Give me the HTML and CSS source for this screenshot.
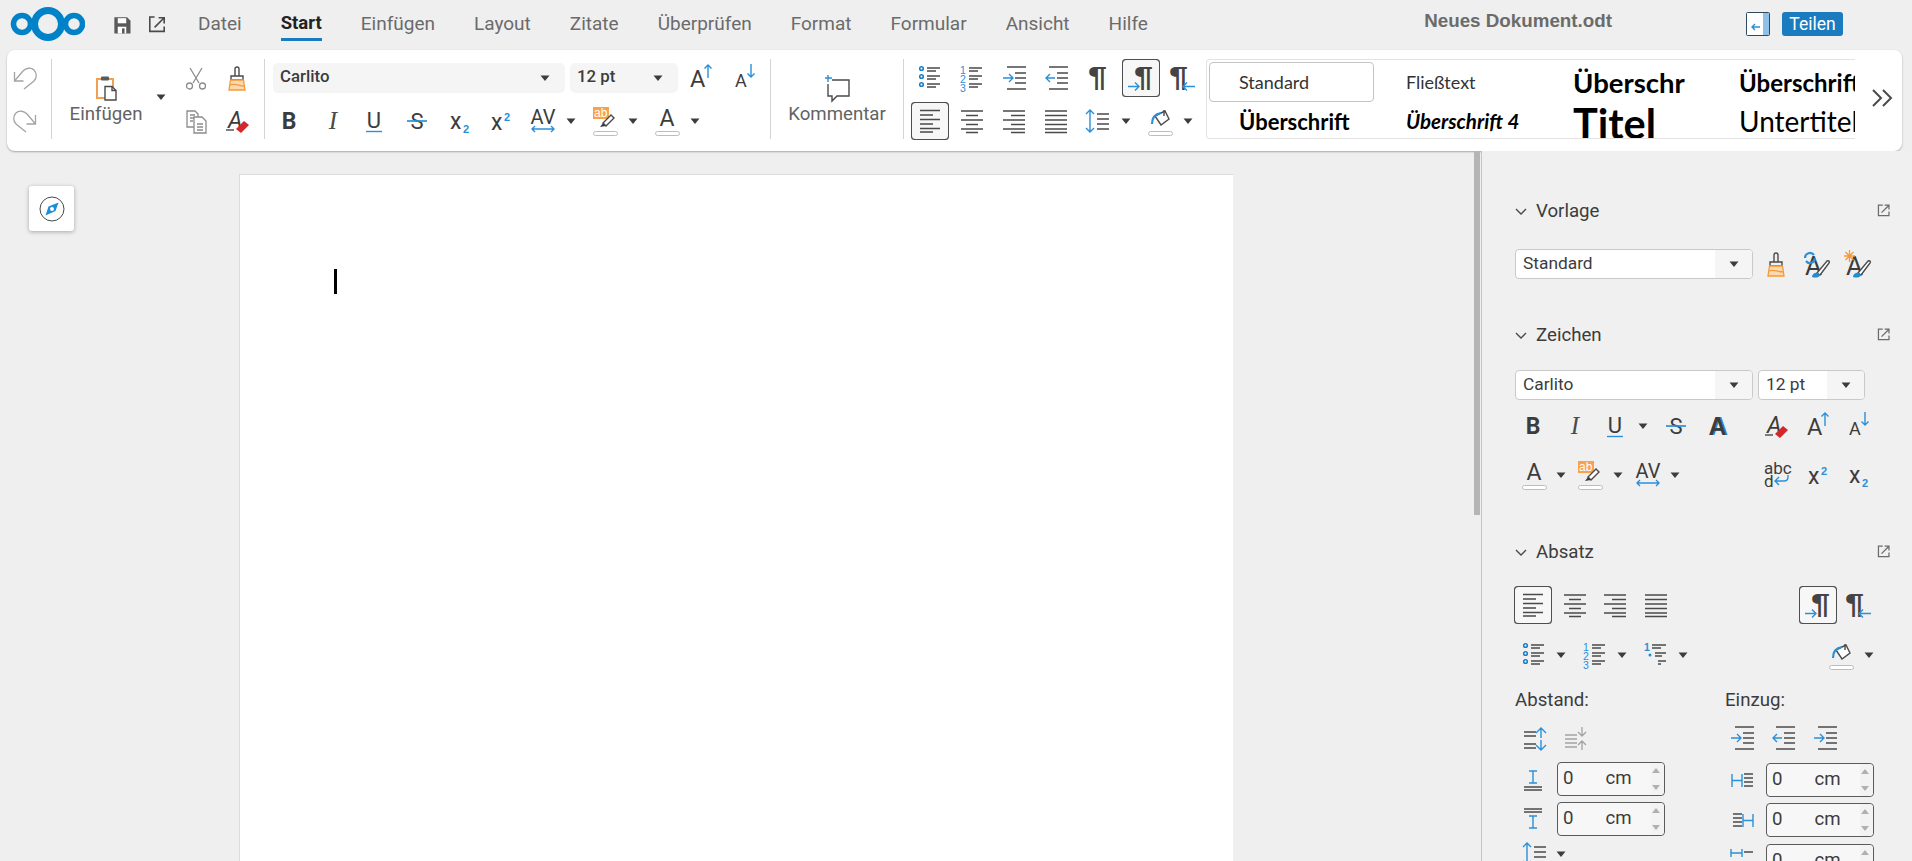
FILE: index.html
```html
<!DOCTYPE html>
<html lang="de">
<head>
<meta charset="utf-8">
<title>Neues Dokument.odt</title>
<link rel="stylesheet" href="styles.css">
</head>
<body>
<svg class="defs" aria-hidden="true"><defs>
<g id="tri"><path class="f-d" d="M7.5 9.5h9l-4.5 5.5z"/></g>
<g id="undo" class="s-g"><path d="M1.5 6v9h9M1.5 15 10 5c3-3 8-4 11-1s3 8 0 11L11 23"/></g>
<g id="redo"><use href="#undo" transform="matrix(-1 0 0 1 24 0)"/></g>
<g id="clip"><path class="s-o2" d="M11 23H3V4h16v8"/><rect class="f-d2" x="7" y="1.5" width="8" height="4" rx="1"/><path class="s-d w" d="M11 11.500h7l4 4V25H11z"/><path class="s-d" d="M18 11.500v4h4"/></g>
<g id="cut" class="s-m"><path d="M6 2l9 15M18 2 9 17"/><circle cx="5.500" cy="20" r="3"/><circle cx="18.500" cy="20" r="3"/></g>
<g id="brush"><path class="s-d" d="M10 10V3a2 2 0 014 0V10M6 10h12v4H6z"/><path class="so-fill" d="M5.500 14h13l1.500 10H4z"/><path class="s-o" d="M5 19c5-2 9 1 14 1"/></g>
<g id="copy" class="s-m"><path d="M3 2h8l3 3v13H3zM6 6h5M6 9h5M6 12h3"/><path class="w" d="M10 8h8l4 4v12H10z"/><path d="M13 15h6M13 18h6M13 21h6"/></g>
<g id="clear"><text class="t-si" x="3" y="19" font-size="23">A</text><path class="s-d" d="M1 21h8"/><path class="f-r" d="M11 20l8-8 5 4-8 8z"/></g>
<g id="bold"><text class="t-sb" x="12" y="20" font-size="23" text-anchor="middle">B</text></g>
<g id="ital"><text class="t-si2" x="12" y="20" font-size="25" text-anchor="middle">I</text></g>
<g id="under"><text class="t-r" x="12" y="19" font-size="22" text-anchor="middle">U</text><path class="s-b" d="M4 22.500h16"/></g>
<g id="strike"><text class="t-r" x="12" y="20" font-size="22" text-anchor="middle">S</text><path class="s-bm" d="M2 12h20"/></g>
<g id="sub"><text class="t-r" x="2" y="20" font-size="23">x</text><text class="t-bb" x="15" y="24" font-size="11">2</text></g>
<g id="sup"><text class="t-r" x="2" y="21" font-size="23">x</text><text class="t-bb" x="15" y="12" font-size="11">2</text></g>
<g id="av"><text class="t-r" x="12" y="15" font-size="20" text-anchor="middle">AV</text><path class="s-b" d="M1 20h22M4 17l-3 3 3 3M20 17l3 3-3 3"/></g>
<g id="hl"><rect class="f-o" x="0" y="-2" width="16" height="12"/><text class="t-w" x="1" y="8" font-size="12">ab</text><path class="s-d w" d="M10 14l8-8 3 3-8 8z"/><path class="f-d" d="M7 18l3-4 3 3z"/><rect class="pill" x="0.500" y="22.500" width="24" height="4" rx="2"/></g>
<g id="color"><text class="t-r" x="12" y="17" font-size="23" text-anchor="middle">A</text><rect class="pill" x="0.500" y="22.500" width="24" height="4" rx="2"/></g>
<g id="aup"><text class="t-r" x="1" y="21" font-size="23.500">A</text><path class="s-b" d="M19 12V-1M15.500 2.500 19-1l3.500 3.500"/></g>
<g id="adn"><text class="t-r" x="3" y="21" font-size="18">A</text><path class="s-b" d="M19-2v13M15.500 7.500 19 11l3.500-3.500"/></g>
<g id="blines" class="s-d"><path d="M9 2h13M9 5h9M9 10h13M9 13h9M9 18h13M9 21h9"/><circle class="s-bd" cx="3.500" cy="2.500" r="1.800"/><circle class="s-bd" cx="3.500" cy="10.500" r="1.800"/><circle class="s-bd" cx="3.500" cy="18.500" r="1.800"/></g>
<g id="nlines" class="s-d"><path d="M9 2h13M9 5h9M9 10h13M9 13h9M9 18h13M9 21h9"/><text class="t-b" x="0" y="8" font-size="10.500">1</text><text class="t-b" x="0" y="17" font-size="10.500">2</text><text class="t-b" x="0" y="26" font-size="10.500">3</text></g>
<g id="mlines" class="s-d"><path d="M8 2h14M8 5h9M11 10h11M11 13h7M14 18h8M14 21h3"/><text class="t-bb" x="0" y="8" font-size="10.500">1</text><circle class="f-b" cx="6" cy="12" r="1.500"/></g>
<g id="indent" class="s-d"><path d="M4 1h19M12 7h11M12 12h11M12 17h11M4 23h19"/><path class="s-b" d="M0 12h10M6 8l4 4-4 4"/></g>
<g id="outdent" class="s-d"><path d="M4 1h19M12 7h11M12 12h11M12 17h11M4 23h19"/><path class="s-b" d="M10 12H1M5 8l-4 4 4 4"/></g>
<g id="indent2" class="s-d"><path d="M4 1h19M12 7h11M12 12h11M12 17h11M4 23h19"/><path class="s-b" d="M0 12h10M6 8l4 4-4 4"/></g>
<g id="pilc"><text class="t-p" x="3" y="20" font-size="27" textLength="19" lengthAdjust="spacingAndGlyphs">¶</text></g>
<g id="pilr"><text class="t-p" x="5" y="20" font-size="27" textLength="19" lengthAdjust="spacingAndGlyphs">¶</text><path class="s-b" d="M-1 20.500h11M6 16.500l4 4-4 4"/></g>
<g id="pill"><text class="t-p" x="0" y="20" font-size="27" textLength="19" lengthAdjust="spacingAndGlyphs">¶</text><path class="s-b" d="M26 20.500H14M18 16.500l-4 4 4 4"/></g>
<g id="al" class="s-d"><path d="M2 1.500h20M2 6h13M2 10.500h20M2 15h13M2 19.500h20M2 23h13"/></g>
<g id="ac" class="s-d"><path d="M1 2h22M6 6.500h12M1 11h22M6 15.500h12M1 20h22M6 23.500h12"/></g>
<g id="ar" class="s-d"><path d="M1 2h22M9 6.500h14M1 11h22M9 15.500h14M1 20h22M9 23.500h14"/></g>
<g id="aj" class="s-d"><path d="M1 2h22M1 6.500h22M1 11h22M1 15.500h22M1 20h22M1 23.500h22"/></g>
<g id="lsp" class="s-d"><path d="M11 5h12M11 10h12M11 15h12M11 20h12"/><path class="s-b" d="M4 1v22M0 5l4-4 4 4M0 19l4 4 4-4"/></g>
<g id="pcol"><path class="s-d w" d="M7 7 17 2l4 8-8 6z"/><path class="s-bt" d="M4 15c0-6 2-10 9-11"/><path class="s-d" d="M16 1v6"/><rect class="pill" x="0.500" y="22.500" width="24" height="4" rx="2"/></g>
<g id="cmt"><path class="s-d" d="M7 5h17v16H12l-5 5v-5H3V9"/><path class="s-b" d="M3 0v7M0 3h7"/></g>
<g id="more"><path class="s-dt" d="M2 4l8 8-8 8M12 4l8 8-8 8"/></g>
<g id="chev"><path class="s-d" d="M1 4l5 5 5-5"/></g>
<g id="ext"><path class="s-et" d="M10 3H3v17h17v-7"/><path class="s-et" d="M8 15 20 3M13 3h7v7"/></g>
<g id="ext2"><path class="s-dt" d="M9 2H3v18h18v-6"/><path class="s-dt" d="M9 15 21 3M14 3h7v7"/></g>
<g id="save"><path class="f-d2" d="M3 3h15l4 4v15H3z"/><rect class="f-w" x="7" y="4" width="10" height="6"/><rect class="f-w" x="7" y="14" width="10" height="8"/><rect class="f-d2" x="12" y="16" width="3" height="6"/></g>
<g id="style-up"><text class="t-r" x="0" y="23" font-size="26">A</text><path class="s-d w" d="M12 21 22 9c2-1 3 1 2 2L15 23z"/><path class="f-b" d="M7 25c0-3 3-5 6-4l2 2c-1 3-5 3-8 2z"/><path class="s-bt" d="M0 6a5 5 0 019-3M10 6a5 5 0 01-9 3"/></g>
<g id="style-new"><text class="t-r" x="0" y="23" font-size="26">A</text><path class="s-d w" d="M12 21 22 9c2-1 3 1 2 2L15 23z"/><path class="f-b" d="M7 25c0-3 3-5 6-4l2 2c-1 3-5 3-8 2z"/><path class="s-o" d="M-2 4h11M3.500 -2V10M-.5 0l8 8M7.500 0l-8 8"/></g>
<g id="aout"><text class="t-bo" x="13" y="21" font-size="25" text-anchor="middle">A</text><text class="t-sb2" x="11.500" y="21" font-size="25" text-anchor="middle">A</text></g>
<g id="abc"><text class="t-r" x="0" y="11" font-size="17">abc</text><text class="t-r" x="0" y="24" font-size="17">d</text><path class="s-b" d="M24 12v2c0 3-2 4-4 4H11M15 14l-4 4 4 4"/></g>
<g id="sp-inc" class="s-d"><path d="M1 6h12M1 10h12M1 18h12M1 22h12"/><path class="s-b" d="M18 12V2M13 7l5-5 5 5M18 14v10M13 19l5 5 5-5"/></g>
<g id="sp-dec" class="s-g"><path d="M1 9h12M1 13h12M1 17h12M1 21h12M18 1v9M14 6l4 4 4-4M18 24v-9M14 19l4-4 4 4"/></g>
<g id="sp-top" class="s-d"><path d="M3 20h18M3 23h18"/><path class="s-b" d="M12 4v12M8 4h8M8 16h8"/></g>
<g id="sp-bot" class="s-d"><path d="M3 2h18M3 5h18"/><path class="s-b" d="M12 9v12M8 9h8M8 21h8"/></g>
<g id="in-l" class="s-d"><path d="M14 6h9M14 10h9M14 14h9M14 18h9"/><path class="s-b" d="M2 6v13M2 12.500h10M12 6v13"/></g>
<g id="in-r" class="s-d"><path d="M3 6h9M3 10h9M3 14h9M3 18h9"/><path class="s-b" d="M13 6v13M13 12.500h10M23 6v13"/></g>
<g id="in-f" class="s-d"><path d="M14 3h9M14 15h9"/><path class="s-b" d="M1 0v8M1 4h11M12 0v8"/></g>
</defs></svg>

<header class="topbar">
  <svg class="logo" viewBox="0 0 76 34"><circle class="ring" cx="13" cy="17" r="8.500"/><circle class="ring big" cx="39" cy="17" r="13.500"/><circle class="ring" cx="65" cy="17" r="8.500"/></svg>
  <svg class="ic top-ic"><use href="#save"/></svg>
  <svg class="ic top-ic2"><use href="#ext2"/></svg>
  <nav class="menu">
    <span>Datei</span><span class="cur">Start</span><span>Einfügen</span><span>Layout</span><span>Zitate</span><span>Überprüfen</span><span>Format</span><span>Formular</span><span>Ansicht</span><span>Hilfe</span>
  </nav>
  <div class="doc-title">Neues Dokument.odt</div>
  <svg class="toggle" viewBox="0 0 24 24"><rect class="tg-box" x=".5" y=".5" width="23" height="23" rx="1"/><rect class="tg-side" x="17" y="1" width="6" height="22"/><path class="s-b" d="M14 15H6M9 12l-3 3 3 3"/></svg>
  <button class="share">Teilen</button>
</header>

<section class="toolbar">
  <div class="g g-undo"><svg class="ic"><use href="#undo"/></svg><svg class="ic"><use href="#redo"/></svg></div>
  <div class="sep"></div>
  <div class="g-paste">
    <div class="paste"><svg class="ic"><use href="#clip"/></svg><span>Einfügen</span></div>
    <svg class="ic paste-arrow"><use href="#tri"/></svg>
    <div class="g r-pair"><svg class="ic"><use href="#cut"/></svg><svg class="ic"><use href="#brush"/></svg><svg class="ic"><use href="#copy"/></svg><svg class="ic"><use href="#clear"/></svg></div>
  </div>
  <div class="sep"></div>
  <div class="g g-font">
    <div class="row font1">
      <div class="tcombo tc-font"><span>Carlito</span><svg class="ic"><use href="#tri"/></svg></div>
      <div class="tcombo tc-size"><span>12 pt</span><svg class="ic"><use href="#tri"/></svg></div>
      <svg class="ic m-aup"><use href="#aup"/></svg>
      <svg class="ic m-adn"><use href="#adn"/></svg>
    </div>
    <div class="ir r-font2">
      <svg class="ic"><use href="#bold"/></svg><svg class="ic"><use href="#ital"/></svg><svg class="ic"><use href="#under"/></svg><svg class="ic"><use href="#strike"/></svg><svg class="ic"><use href="#sub"/></svg><svg class="ic"><use href="#sup"/></svg><svg class="ic"><use href="#av"/></svg><svg class="ic"><use href="#tri"/></svg><svg class="ic"><use href="#hl"/></svg><svg class="ic"><use href="#tri"/></svg><svg class="ic"><use href="#color"/></svg><svg class="ic"><use href="#tri"/></svg>
    </div>
  </div>
  <div class="sep"></div>
  <div class="g-comment"><svg class="ic"><use href="#cmt"/></svg><span>Kommentar</span></div>
  <div class="sep"></div>
  <div class="g g-para">
    <div class="ir r-para1">
      <svg class="ic"><use href="#blines"/></svg><svg class="ic"><use href="#nlines"/></svg><svg class="ic"><use href="#indent"/></svg><svg class="ic"><use href="#outdent"/></svg><svg class="ic"><use href="#pilc"/></svg><svg class="ic on"><use href="#pilr"/></svg><svg class="ic"><use href="#pill"/></svg>
    </div>
    <div class="ir r-para2">
      <svg class="ic on"><use href="#al"/></svg><svg class="ic"><use href="#ac"/></svg><svg class="ic"><use href="#ar"/></svg><svg class="ic"><use href="#aj"/></svg><svg class="ic"><use href="#lsp"/></svg><svg class="ic"><use href="#tri"/></svg><svg class="ic"><use href="#pcol"/></svg><svg class="ic"><use href="#tri"/></svg>
    </div>
  </div>
  <div class="styles">
    <div class="st st-std selected">Standard</div>
    <div class="st st-std">Fließtext</div>
    <div class="st st-h">Überschr</div>
    <div class="st st-h1">Überschrift</div>
    <div class="st st-h2">Überschrift</div>
    <div class="st st-h4">Überschrift 4</div>
    <div class="st st-title">Titel</div>
    <div class="st st-sub">Untertitel</div>
  </div>
  <svg class="ic more"><use href="#more"/></svg>
</section>

<main class="workspace">
  <div class="canvas">
    <button class="nav-btn" aria-label="Navigator">
      <svg class="compass" viewBox="0 0 26 26"><circle class="cp-ring" cx="13" cy="13" r="12"/><path class="f-b" d="M19.500 6.500 16.500 15 6.500 19.500 9.500 10.500z"/><circle class="f-w" cx="13" cy="13" r="2"/></svg>
    </button>
    <div class="page"><div class="caret"></div></div>
  </div>
  <div class="vbar"><div class="thumb"></div></div>
  <aside class="sidebar">
    <div class="ph"><svg class="chev"><use href="#chev"/></svg><span>Vorlage</span><svg class="ic ext"><use href="#ext"/></svg></div>
    <div class="row tmpl">
      <div class="combo c-wide"><span>Standard</span><i><svg class="ic"><use href="#tri"/></svg></i></div>
      <svg class="ic"><use href="#brush"/></svg><svg class="ic"><use href="#style-up"/></svg><svg class="ic"><use href="#style-new"/></svg>
    </div>

    <div class="ph ph-z"><svg class="chev"><use href="#chev"/></svg><span>Zeichen</span><svg class="ic ext"><use href="#ext"/></svg></div>
    <div class="row char-combos">
      <div class="combo c-wide"><span>Carlito</span><i><svg class="ic"><use href="#tri"/></svg></i></div>
      <div class="combo c-size"><span>12 pt</span><i><svg class="ic"><use href="#tri"/></svg></i></div>
    </div>
    <div class="ir s-ch1">
      <svg class="ic"><use href="#bold"/></svg><svg class="ic"><use href="#ital"/></svg><svg class="ic"><use href="#under"/></svg><svg class="ic"><use href="#tri"/></svg><svg class="ic"><use href="#strike"/></svg><svg class="ic"><use href="#aout"/></svg><svg class="ic"><use href="#clear"/></svg><svg class="ic"><use href="#aup"/></svg><svg class="ic"><use href="#adn"/></svg>
    </div>
    <div class="ir s-ch2">
      <svg class="ic"><use href="#color"/></svg><svg class="ic"><use href="#tri"/></svg><svg class="ic"><use href="#hl"/></svg><svg class="ic"><use href="#tri"/></svg><svg class="ic"><use href="#av"/></svg><svg class="ic"><use href="#tri"/></svg><svg class="ic"><use href="#abc"/></svg><svg class="ic"><use href="#sup"/></svg><svg class="ic"><use href="#sub"/></svg>
    </div>

    <div class="ph ph-a"><svg class="chev"><use href="#chev"/></svg><span>Absatz</span><svg class="ic ext"><use href="#ext"/></svg></div>
    <div class="ir s-al">
      <svg class="ic on"><use href="#al"/></svg><svg class="ic"><use href="#ac"/></svg><svg class="ic"><use href="#ar"/></svg><svg class="ic"><use href="#aj"/></svg><svg class="ic on"><use href="#pilr"/></svg><svg class="ic"><use href="#pill"/></svg>
    </div>
    <div class="ir s-li">
      <svg class="ic"><use href="#blines"/></svg><svg class="ic"><use href="#tri"/></svg><svg class="ic"><use href="#nlines"/></svg><svg class="ic"><use href="#tri"/></svg><svg class="ic"><use href="#mlines"/></svg><svg class="ic"><use href="#tri"/></svg><svg class="ic"><use href="#pcol"/></svg><svg class="ic"><use href="#tri"/></svg>
    </div>
    <div class="spacing">
      <div class="col">
        <div class="lbl">Abstand:</div>
        <div class="ir s-sp"><svg class="ic"><use href="#sp-inc"/></svg><svg class="ic"><use href="#sp-dec"/></svg></div>
        <div class="sr sr-1"><svg class="ic"><use href="#sp-top"/></svg><div class="spin"><span>0</span><span>cm</span><b></b></div></div>
        <div class="sr"><svg class="ic"><use href="#sp-bot"/></svg><div class="spin"><span>0</span><span>cm</span><b></b></div></div>
        <div class="ir s-ls"><svg class="ic"><use href="#lsp"/></svg><svg class="ic"><use href="#tri"/></svg></div>
      </div>
      <div class="col col-r">
        <div class="lbl">Einzug:</div>
        <div class="ir s-in"><svg class="ic"><use href="#indent"/></svg><svg class="ic"><use href="#outdent"/></svg><svg class="ic"><use href="#indent2"/></svg></div>
        <div class="sr sr-1"><svg class="ic"><use href="#in-l"/></svg><div class="spin"><span>0</span><span>cm</span><b></b></div></div>
        <div class="sr"><svg class="ic"><use href="#in-r"/></svg><div class="spin"><span>0</span><span>cm</span><b></b></div></div>
        <div class="sr sr-3"><svg class="ic"><use href="#in-f"/></svg><div class="spin"><span>0</span><span>cm</span><b></b></div></div>
      </div>
    </div>
  </aside>
</main>
</body>
</html>
```

FILE: styles.css
```css
* { box-sizing: border-box; }
html, body { margin: 0; height: 100%; }
body {
  height: 100vh;
  overflow: hidden;
  display: flex;
  flex-direction: column;
  background: #efefef;
  font-family: Roboto, "Liberation Sans", sans-serif;
  color: #3c3c3c;
}
.defs { position: absolute; width: 0; height: 0; }
.ic { display: block; width: 24px; height: 24px; overflow: visible; flex: none; }
text { stroke: none; }

/* icon paint: group classes are inherited, so a child class can override them */
.s-d { stroke: #4a4a4a; fill: none; stroke-width: 1.4; }
.s-g { stroke: #a3a3a3; fill: none; stroke-width: 1.3; }
.s-m { stroke: #8c8c8c; fill: none; stroke-width: 1.3; }
.s-b { stroke: #2a90d8; fill: none; stroke-width: 1.4; }
.s-bm { stroke: #2a90d8; fill: none; stroke-width: 1.7; }
.s-bd { stroke: #1d7fc4; fill: #fff; stroke-width: 1.6; }
.s-bt { stroke: #2a90d8; fill: none; stroke-width: 2.2; }
.s-o { stroke: #f59a3c; fill: none; stroke-width: 1.3; }
.s-o2 { stroke: #f0a050; fill: none; stroke-width: 2; }
.so-fill { stroke: #f59a3c; fill: #fbd9ae; stroke-width: 1.3; }
.s-dt { stroke: #4a4a4a; fill: none; stroke-width: 2; }
.s-et { stroke: #6b6b6b; fill: none; stroke-width: 2; transform: scale(.62) translate(9px, 7px); }
.w, .s-d.w { fill: #fff; }
.f-d { fill: #3c3c3c; stroke: none; }
.f-d2 { fill: #5a5a5a; stroke: none; }
.f-b { fill: #1d8dd8; stroke: none; }
.f-o { fill: #f9a24d; stroke: none; }
.f-r { fill: #d3272b; stroke: none; }
.f-w { fill: #fff; stroke: none; }
.pill { fill: #fff; stroke: #bdbdbd; stroke-width: 1; }
.t-r { font-family: Roboto, sans-serif; fill: #3c3c3c; }
.t-sb { font-family: Roboto, sans-serif; font-weight: 700; fill: #3c3c3c; }
.t-sb2 { font-family: "Liberation Sans", sans-serif; font-weight: 700; fill: #3c3c3c; }
.t-si { font-family: Roboto, sans-serif; font-style: italic; fill: #3c3c3c; }
.t-si2 { font-family: "Liberation Serif", serif; font-style: italic; fill: #4a4a4a; }
.t-bb { font-family: "Liberation Sans", sans-serif; font-weight: 700; fill: #2a90d8; }
.t-b { font-family: "Liberation Sans", sans-serif; fill: #2a90d8; }
.t-bo { font-family: "Liberation Sans", sans-serif; font-weight: 700; fill: #1d8dd8; }
.t-w { font-family: "Liberation Sans", sans-serif; fill: #fff; }
.t-p { font-family: "Liberation Sans", sans-serif; font-weight: 700; fill: #444; }

/* top bar */
.topbar { height: 50px; flex: none; display: flex; align-items: center; }
.logo { width: 76px; height: 34px; margin: 0 0 2px 9px; flex: none; }
.ring { fill: none; stroke: #0082c9; stroke-width: 5.500; }
.ring.big { stroke-width: 7; }
.top-ic { margin-left: 25px; transform: scale(.85); }
.top-ic2 { margin-left: 11px; transform: scale(.8); }
.menu { display: flex; gap: 39px; margin-left: 29px; font-size: 19px; color: #6b6b6b; }
.menu span { padding: 3px 0; border-bottom: 3px solid transparent; }
.menu .cur { color: #222; font-weight: 700; font-size: 18.500px; border-bottom-color: #1a7cbf; }
.doc-title {
  margin: 0 134px 8px auto;
  font: 700 18.800px "Liberation Sans", sans-serif;
  color: #6b6b6b;
}
.toggle { width: 24px; height: 24px; margin: 0 12px 2px 0; flex: none; }
.tg-box { fill: #fff; stroke: #2f4a60; stroke-width: 1; }
.tg-side { fill: #8fc0e8; }
.share {
  width: 61px; height: 24px; margin: 0 69px 2px 0; padding: 0;
  border: 0; border-radius: 3px; background: #1a7cbf; color: #fff;
  font: 17.500px Roboto, sans-serif;
}

/* toolbar */
.toolbar {
  height: 101px; flex: none; margin: 0 10px 0 7px;
  display: flex; align-items: flex-start;
  background: #fff; border-radius: 8px;
  box-shadow: 0 1px 2px rgba(0, 0, 0, .3);
}
.sep { width: 1px; height: 80px; margin-top: 9px; background: #d4d4d4; flex: none; }
.g { display: grid; grid-auto-rows: 43px; padding-top: 6px; align-items: center; }
.row { display: flex; align-items: center; }
.ir { display: grid; align-items: center; justify-items: start; }
.g-undo { width: 44px; padding-left: 6px; }
.g-paste { width: 212px; display: flex; flex: none; }
.paste {
  width: 72px; margin: 25px 0 0 18px;
  display: flex; flex-direction: column; align-items: center; gap: 3px;
  font-size: 18.670px; color: #636363; line-height: 24px; white-space: nowrap;
}
.paste-arrow { margin: 35px 0 0 7px; }
.r-pair { grid-template-columns: 41px 24px; margin-left: 11px; justify-items: start; }
.g-font { width: 505px; }
.font1 { padding-left: 8px; }
.tcombo {
  height: 30px; background: #f5f5f5; border-radius: 5px;
  display: flex; align-items: center; justify-content: space-between;
  padding: 0 8px 0 7px; font-size: 16.800px; font-weight: 500; color: #3c3c3c;
}
.tcombo span { margin-bottom: 4px; }
.tc-font { width: 292px; }
.tc-size { width: 108px; margin-left: 5px; }
.m-aup { margin-left: 11px; }
.m-adn { margin-left: 19px; }
.r-font2 { padding-left: 12px; grid-template-columns: 44px 41px 43px 43px 41px 42px 28px 34px 28px 34px 28px 24px; }
.g-comment {
  width: 132px; flex: none; padding-top: 25px;
  display: flex; flex-direction: column; align-items: center; gap: 3px;
  font-size: 18.670px; line-height: 24px; color: #636363;
}
.g-para { width: 302px; flex: none; }
.r-para1 { padding-left: 14px; grid-template-columns: 42px 43px 42px 40px 44px 40px 24px; }
.r-para2 { padding-left: 14px; grid-template-columns: 42px 42px 42px 42px 28px 34px 28px 24px; }
.on {
  background: #f7f7f7; border-radius: 1px;
  box-shadow: 0 0 0 6px #f7f7f7, 0 0 0 7px #4f4f4f;
}
.styles {
  width: 649px; height: 80px; margin-top: 9px; flex: none; overflow: hidden;
  display: grid; grid-template-columns: 167px 167px 166px 167px; grid-template-rows: 40px 38px;
  padding: 2px 0 0 2px;
  border: 1px solid #e3e3e3; border-right: 0; border-radius: 4px 0 0 4px;
  font-family: Lato, sans-serif; color: #000; white-space: nowrap;
}
.st { display: flex; align-items: center; padding-left: 30px; font-size: 18px; min-width: 0; }
.selected { margin-right: 2px; border: 1px solid #c4c4c4; border-radius: 4px; padding-left: 29px; color: #222; }
.st-std { color: #333; }
.st-h { font-size: 27.500px; font-weight: 700; }
.st-h1 { font-size: 24px; font-weight: 700; }
.st-h2 { font-size: 22px; font-weight: 700; }
.st-h4 { font-size: 20.500px; font-weight: 700; font-style: italic; }
.st-title { font-size: 41.500px; font-weight: 700; padding-top: 3px; }
.st-sub { font-size: 28px; }
.more { margin: 36px 0 0 16px; }

/* workspace */
.workspace { flex: 1; min-height: 0; display: flex; }
.canvas { width: 1474px; flex: none; position: relative; overflow: hidden; padding: 23px 0 0 239px; }
.page {
  width: 994px; height: 100%;
  padding: 95px 0 0 95px;
  background: #fff; border: solid #dcdcdc; border-width: 1px 0 0 1px;
}
.caret { width: 3px; height: 25px; background: #000; margin: -1px 0 0 -1px; }
.nav-btn {
  position: absolute; left: 29px; top: 35px; width: 45px; height: 45px; padding: 0;
  border: 0; border-radius: 3px; background: #fff;
  box-shadow: 0 1px 4px rgba(0, 0, 0, .3);
  display: flex; align-items: center; justify-content: center;
}
.compass { width: 26px; height: 26px; }
.cp-ring { fill: none; stroke: #4a4a4a; stroke-width: 1; }
.vbar { width: 7px; flex: none; }
.thumb { width: 6px; height: 364px; background: #b5b5b5; }

/* sidebar */
.sidebar {
  flex: 1; min-width: 0; overflow: hidden;
  border-left: 1px solid #c4c4c4; background: #f0f0f0;
  padding: 48px 17px 0 33px;
}
.ph { height: 24px; display: flex; align-items: center; font-size: 18.670px; color: #3c3c3c; }
.chev { width: 12px; height: 12px; flex: none; margin-right: 9px; }
.ext { margin-left: auto; }
.ph-z { margin-top: 44px; }
.ph-a { margin-top: 53px; }
.tmpl { margin-top: 26px; gap: 17px; }
.tmpl .combo { margin-right: -6px; }
.combo {
  height: 30px; background: #fff; border: 1px solid #c9c9c9; border-radius: 4px;
  display: flex; align-items: center; justify-content: space-between;
  padding-left: 7px; font-size: 17.330px; color: #3c3c3c; overflow: hidden;
}
.combo span { margin-bottom: 3px; }
.combo i { width: 37px; height: 100%; background: #f5f5f5; display: flex; align-items: center; justify-content: center; }
.c-wide { width: 238px; }
.c-size { width: 107px; margin-left: 5px; }
.char-combos { margin-top: 23px; }
.s-ch1 { margin-top: 14px; padding-left: 6px; grid-template-columns: 42px 40px 28px 33px 42px 58px 42px 40px 24px; }
.s-ch2 { margin-top: 25px; padding-left: 7px; grid-template-columns: 27px 29px 28px 30px 27px 101px 42px 41px 24px; }
.s-al { margin-top: 29px; padding-left: 6px; grid-template-columns: 42px 40px 41px 162px 39px 24px; }
.s-li { margin-top: 26px; padding-left: 7px; grid-template-columns: 27px 34px 27px 34px 27px 158px 28px 24px; }
.spacing { margin-top: 21px; display: grid; grid-template-columns: 210px 1fr; }
.lbl { height: 24px; line-height: 24px; font-size: 18.670px; }
.s-sp { margin-top: 14px; padding-left: 8px; grid-template-columns: 41px 24px; }
.s-in { margin-top: 14px; padding-left: 6px; grid-template-columns: 41px 42px 24px; }
.sr { display: flex; align-items: center; margin-top: 6px; padding-left: 6px; gap: 12px; }
.sr-1 { margin-top: 12px; }
.col-r .sr { padding-left: 5px; }
.col-r .sr-1 { margin-top: 13px; }
.col-r .sr-3 { margin-top: 7px; }
.s-ls { margin-top: 6px; padding-left: 8px; grid-template-columns: 26px 24px; }
.spin {
  position: relative; width: 108px; height: 34px;
  display: flex; align-items: center;
  padding: 0 0 3px 5px; font-size: 18.670px; color: #3c3c3c;
  background: #f7f7f7; border: 1px solid #5a5a5a; border-radius: 4px;
}
.spin span + span { margin-left: 32px; }
.spin b { position: absolute; right: 0; top: 0; bottom: 0; width: 13px; background: #f3f3f3; border-radius: 0 4px 4px 0; }
.spin b::before, .spin b::after {
  content: ""; position: absolute; left: 1px; width: 0; height: 0;
  border: 4px solid transparent;
}
.spin b::before { top: 1px; border-bottom: 5px solid #b0b0b0; }
.spin b::after { bottom: 1px; border-top: 5px solid #b0b0b0; }
```
